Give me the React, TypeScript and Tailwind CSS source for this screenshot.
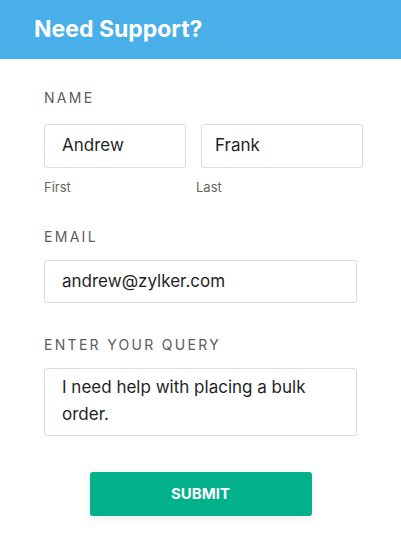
const font = { fontFamily: "Inter, 'Noto Sans', sans-serif" };

const Label = ({ children, className = "" }: { children: string; className?: string }) => (
  <p className={`text-[14px] leading-4 tracking-[2.3px] text-[#5c5c5c] ${className}`}>{children}</p>
);

const Field = ({ value, className = "" }: { value: string; className?: string }) => (
  <div
    className={`flex items-center rounded-[3px] border border-[#dcdcdc] bg-white text-[17px] text-[#1f1f1f] ${className}`}
  >
    {value}
  </div>
);

const App = () => {
  return (
    <div className="min-h-[547px] w-[401px] bg-white" style={font}>
      <header className="flex h-[59px] items-center bg-[#48afe8] px-[34px]">
        <h1 className="text-[23px] font-bold text-white">Need Support?</h1>
      </header>

      <form className="flex flex-col pl-[44px] pt-[31px]">
        <Label>NAME</Label>
        <div className="mt-[18px] flex gap-[15px]">
          <Field value="Andrew" className="h-[44px] w-[142px] pl-[17px]" />
          <Field value="Frank" className="h-[44px] w-[162px] pl-[13px]" />
        </div>
        <div className="mt-[11px] flex text-[13px] leading-4 text-[#666]">
          <span className="w-[152px]">First</span>
          <span>Last</span>
        </div>

        <Label className="mt-[34px]">EMAIL</Label>
        <Field value="andrew@zylker.com" className="mt-[15px] h-[43px] w-[313px] pl-[17px]" />

        <Label className="mt-[34px]">ENTER YOUR QUERY</Label>
        <div className="mt-[15px] h-[68px] w-[313px] rounded-[3px] border border-[#dcdcdc] pl-[17px] pr-[14px] pt-[5px] text-[17px] leading-[27px] text-[#1f1f1f]">
          I need help with placing a bulk order.
        </div>
      </form>

      <div className="mt-[36px] flex justify-center">
        <button
          type="button"
          className="h-[44px] w-[222px] rounded-[3px] bg-[#00b18a] text-[15px] font-bold text-white shadow-[0_2px_10px_rgba(0,0,0,0.08)]"
        >
          SUBMIT
        </button>
      </div>
    </div>
  );
};

export default App;
